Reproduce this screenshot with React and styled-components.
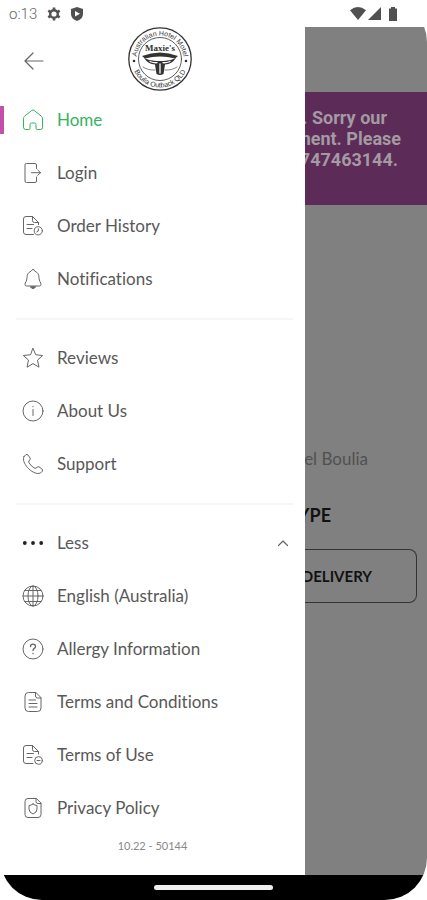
import React from "react";
import styled, { createGlobalStyle } from "styled-components";

const GlobalStyle = createGlobalStyle`
  * {
    box-sizing: border-box;
  }
  body {
    margin: 0;
    background: #fff;
    font-family: Lato, "Liberation Sans", sans-serif;
    font-variant-ligatures: none;
  }
`;

const Screen = styled.div`
  display: flex;
  flex-direction: column;
  min-height: 100vh;
  border-radius: 0 42px 42px 42px;
  overflow: hidden;
  background: #fff;
`;

const StatusBar = styled.header`
  display: flex;
  justify-content: space-between;
  align-items: center;
  height: 27px;
  padding: 0 30px 0 9px;
  color: #505050;
`;

const StatusGroup = styled.div`
  display: flex;
  align-items: center;
  gap: ${(props) => props.$gap}px;
`;

const Clock = styled.span`
  font-family: Roboto, sans-serif;
  font-size: 15px;
  font-weight: 300;
  color: #666;
`;

const Main = styled.div`
  display: flex;
  flex: 1;
`;

const Drawer = styled.aside`
  flex: 5;
  min-width: 0;
  background: #fff;
`;

const DrawerHeader = styled.div`
  display: grid;
  grid-template-columns: 1fr auto 1fr;
  align-items: start;
  height: 66px;
  padding: 0 8px 0 23px;
`;

const BackButton = styled.button`
  display: flex;
  justify-self: start;
  margin-top: 23px;
  padding: 0;
  border: 0;
  background: none;
  color: #666;
`;

const Divider = styled.hr`
  height: 2px;
  margin: 13px 12px 11px 16px;
  border: 0;
  background: #f6f6f6;
`;

const List = styled.ul`
  margin: 0;
  padding: 0;
  list-style: none;
`;

const Item = styled.a`
  display: flex;
  align-items: center;
  width: 100%;
  height: 53px;
  padding: 0 16px 0 0;
  border: 0;
  background: none;
  font-family: inherit;
  font-size: 17px;
  line-height: 24px;
  text-decoration: none;
  text-align: left;
  color: ${(props) => (props.$active ? "#35b25c" : "#666")};
`;

const Marker = styled.span`
  width: 4px;
  height: 28px;
  margin-right: 18px;
  background: ${(props) => (props.$active ? "#c24fae" : "transparent")};
`;

const Label = styled.span`
  flex: 1;
  margin-left: 13px;
  color: ${(props) => (props.$active ? "#35b25c" : "#585858")};
`;

const Version = styled.p`
  margin: 0;
  font-size: 11px;
  line-height: 24px;
  text-align: center;
  color: #888;
`;

const Backdrop = styled.main`
  flex: 2;
  min-width: 0;
  overflow: hidden;
  background: #808080;
`;

const Toolbar = styled.div`
  height: 65px;
`;

const Banner = styled.div`
  height: 113px;
  padding-top: 15px;
  background: #5c2b58;
  font-family: Roboto, sans-serif;
  font-size: 18px;
  font-weight: 700;
  line-height: 21px;
  color: #a39aa2;
`;

const Line = styled.div`
  display: flex;
  justify-content: flex-end;
  padding-right: ${(props) => props.$end}px;
  white-space: nowrap;
`;

const Venue = styled(Line)`
  margin-top: 242px;
  font-size: 17px;
  line-height: 24px;
  color: #505050;
`;

const Heading = styled(Line).attrs({ as: "h2" })`
  margin: 32px 0 22px;
  font-size: 18px;
  font-weight: 700;
  line-height: 24px;
  color: #111;
`;

const DeliveryButton = styled.button`
  display: flex;
  justify-content: flex-end;
  align-items: center;
  width: calc(100% - 10px);
  height: 54px;
  padding: 0 44px 0 0;
  border: 1px solid #333;
  border-left: 0;
  border-radius: 0 8px 8px 0;
  background: none;
  font-family: inherit;
  font-size: 15px;
  font-weight: 700;
  color: #111;
`;

const NavBar = styled.footer`
  display: flex;
  justify-content: center;
  align-items: center;
  height: 25px;
  background: #000;
`;

const HomeHandle = styled.div`
  width: 28%;
  height: 5px;
  border-radius: 3px;
  background: #eee;
`;

const Svg = styled.svg`
  display: block;
  flex: none;
  overflow: visible;
  fill: none;
  stroke: currentColor;
  stroke-width: 1;
  stroke-linecap: round;
  stroke-linejoin: round;
`;

const Icon = ({ children }) => (
  <Svg width="22" height="22" viewBox="0 0 22 22" aria-hidden="true">
    {children}
  </Svg>
);

const icons = {
  home: (
    <path d="M1.5 9.2 Q1.5 8.2 2.3 7.5 L9.8 1.4 Q11 .6 12.2 1.4 L19.7 7.5 Q20.5 8.2 20.5 9.2 V18.5 Q20.5 20.5 18.5 20.5 H15.2 Q14 20.5 14 19.3 V15.5 Q14 14 12.5 14 H9.5 Q8 14 8 15.5 V19.3 Q8 20.5 6.8 20.5 H3.5 Q1.5 20.5 1.5 18.5 Z" />
  ),
  login: (
    <path d="M14.5 6.5 V3 Q14.5 1.5 13 1.5 H4.5 Q3 1.5 3 3 V19 Q3 20.5 4.5 20.5 H13 Q14.5 20.5 14.5 19 V15 M9.5 10.7 H18.5 M15.7 8 L18.5 10.7 L15.7 13.4" />
  ),
  history: (
    <>
      <path d="M11.5 19.5 H4 Q1.5 19.5 1.5 17 V4 Q1.5 1.5 4 1.5 H10.5 L16.5 7.5 V9.5 M10.5 1.5 V5.5 Q10.5 7.5 12.5 7.5 H16.5 M5 9.5 H11.5 M5 13.5 H10" />
      <circle cx="16.3" cy="15.8" r="4.1" />
      <path d="M16.3 13.8 V16 L14.7 17" />
    </>
  ),
  bell: (
    <>
      <path d="M11 1.2 L9 3.2 C6.5 4.2 5 6.5 5 9.5 C5 13.5 3 14.2 3 16.6 Q3 18 4.5 18 H17.5 Q19 18 19 16.6 C19 14.2 17 13.5 17 9.5 C17 6.5 15.5 4.2 13 3.2 Z" />
      <path d="M8.5 19 Q11 22.5 13.5 19 Z" fill="currentColor" />
    </>
  ),
  star: (
    <path d="M11 1.5 L13.8 7.8 L20.7 8.5 L15.5 13.1 L17 20.2 L11 16.6 L5 20.2 L6.5 13.1 L1.3 8.5 L8.2 7.8 Z" />
  ),
  info: (
    <>
      <circle cx="11" cy="11" r="10" />
      <path d="M11 9.5 V15.5 M11 6.4 V6.8" />
    </>
  ),
  phone: (
    <path d="M2.1 3.4 L3.8 1.7 Q5 .9 6.1 2.1 L8 4.9 Q8.7 6 7.8 6.9 L6.8 8 Q6.5 9 7.2 10 Q9 13 12 14.8 Q13 15.5 14 15.2 L15.1 14.2 Q16 13.3 17.1 14 L19.9 15.9 Q21.1 17 20.3 18.2 L18.6 19.9 C14.5 22 8.5 18 5.5 14.5 C2.5 11 .2 6.5 2.1 3.4 Z" />
  ),
  dots: (
    <g fill="currentColor" stroke="none" color="#222">
      <circle cx="2.8" cy="11" r="1.9" />
      <circle cx="11" cy="11" r="1.9" />
      <circle cx="19.2" cy="11" r="1.9" />
    </g>
  ),
  globe: (
    <>
      <circle cx="11" cy="11" r="10" />
      <ellipse cx="11" cy="11" rx="5" ry="10" />
      <path d="M11 1 V21 M1 11 H21 M2.8 5.5 H19.2 M2.8 16.5 H19.2" />
    </>
  ),
  question: (
    <>
      <circle cx="11" cy="11" r="10" />
      <path d="M8.5 8.5 Q8.5 6.2 11 6.2 Q13.5 6.2 13.5 8.4 Q13.5 9.7 12.2 10.4 Q11 11.2 11 12.6 M11 15.3 V15.7" strokeWidth="1.3" />
    </>
  ),
  document: (
    <path d="M13.5 1.5 H6.5 Q3 1.5 3 5 V17 Q3 20.5 6.5 20.5 H15.5 Q19 20.5 19 17 V7 Z M13.5 1.5 V5 Q13.5 7 15.5 7 H19 M7 9 H13.5 M7 12.5 H15 M7 16 H15" />
  ),
  usage: (
    <>
      <path d="M11 19.5 H4 Q1.5 19.5 1.5 17 V4 Q1.5 1.5 4 1.5 H10.5 L16.5 7.5 V10 M10.5 1.5 V5.5 Q10.5 7.5 12.5 7.5 H16.5 M5 9.5 H11.5 M5 13.5 H10" />
      <circle cx="16.5" cy="16.5" r="3.8" />
      <path d="M15 16.5 H18" />
    </>
  ),
  privacy: (
    <>
      <path d="M14 1.5 H6 Q3 1.5 3 4.5 V17.5 Q3 20.5 6 20.5 H16 Q19 20.5 19 17.5 V6.5 Z M14 1.5 V4.5 Q14 6.5 16 6.5 H19" />
      <path d="M11 7 Q9 8.5 7 8.5 V12 Q7 15.5 11 17 Q15 15.5 15 12 V8.5 Q13 8.5 11 7 Z" />
    </>
  ),
};

const sections = [
  [
    { icon: "home", label: "Home", active: true },
    { icon: "login", label: "Login" },
    { icon: "history", label: "Order History" },
    { icon: "bell", label: "Notifications" },
  ],
  [
    { icon: "star", label: "Reviews" },
    { icon: "info", label: "About Us" },
    { icon: "phone", label: "Support" },
  ],
];

const moreItems = [
  { icon: "globe", label: "English (Australia)" },
  { icon: "question", label: "Allergy Information" },
  { icon: "document", label: "Terms and Conditions" },
  { icon: "usage", label: "Terms of Use" },
  { icon: "privacy", label: "Privacy Policy" },
];

const MenuItem = ({ icon, label, active }) => (
  <li>
    <Item href="#" $active={active}>
      <Marker $active={active} />
      <Icon>{icons[icon]}</Icon>
      <Label $active={active}>{label}</Label>
    </Item>
  </li>
);

const Logo = () => (
  <Svg width="64" height="64" viewBox="0 0 64 64" color="#333">
    <defs>
      <path id="arcTop" d="M8.5 32 A23.5 23.5 0 0 1 55.5 32" />
      <path id="arcBottom" d="M3.5 32 A28.5 28.5 0 0 0 60.5 32" />
    </defs>
    <circle cx="32" cy="32" r="31.2" strokeWidth="1.3" />
    <circle cx="32" cy="32" r="21.5" strokeWidth="0.8" />
    <g
      fill="currentColor"
      stroke="none"
      fontFamily="Liberation Sans, sans-serif"
      fontSize="7"
      textAnchor="middle"
    >
      <text>
        <textPath href="#arcTop" startOffset="50%">
          Australian Hotel Motel
        </textPath>
      </text>
      <text>
        <textPath href="#arcBottom" startOffset="50%">
          Boulia Outback QLD
        </textPath>
      </text>
      <circle cx="6" cy="34" r="1.3" />
      <circle cx="58" cy="34" r="1.3" />
      <text x="32" y="24" fontFamily="Liberation Serif, serif" fontSize="9" fontWeight="700">
        Maxie's
      </text>
      <path d="M14 29 Q32 22 50 29 L47 31.5 Q32 27.5 17 31.5 Z" />
      <path d="M16 31 Q22 34 28 34 H36 Q42 34 48 31 Q44 37 37 37.5 L35.5 47 Q32 49 28.5 47 L27 37.5 Q20 37 16 31 Z" />
    </g>
    <path d="M22 34.5 Q26 36 29 35.7 M42 34.5 Q38 36 35 35.7 M32 37 V46" stroke="#fff" strokeWidth="1.3" />
    <path d="M15 40 Q20 43.5 27 43 M37 43 Q44 43.5 49 40" strokeWidth="0.6" />
  </Svg>
);

const App = () => (
  <>
    <GlobalStyle />
    <Screen>
      <StatusBar>
        <StatusGroup $gap={10}>
          <Clock>o:13</Clock>
          <Svg width="14" height="14" viewBox="0 0 14 14">
            <circle cx="7" cy="7" r="3.8" strokeWidth="2.4" />
            <path
              d="M7 0.4 V2.5 M7 11.5 V13.6 M1.3 3.7 L3.1 4.8 M10.9 9.2 L12.7 10.3 M1.3 10.3 L3.1 9.2 M10.9 4.8 L12.7 3.7"
              strokeWidth="2.6"
              strokeLinecap="butt"
            />
          </Svg>
          <Svg width="12" height="14" viewBox="0 0 12 14">
            <path d="M6 0 L12 2 V7 Q12 12 6 14 Q0 12 0 7 V2 Z" fill="currentColor" stroke="none" />
            <path d="M4 4 L9 6.8 L4 9.6 Z" fill="#fff" stroke="none" />
          </Svg>
        </StatusGroup>
        <StatusGroup $gap={2}>
          <Svg width="16" height="13" viewBox="0 0 16 13">
            <path d="M0 3.2 Q8 -3 16 3.2 L8 13 Z" fill="currentColor" stroke="none" />
          </Svg>
          <Svg width="13" height="13" viewBox="0 0 13 13">
            <path d="M13 0 V13 H0 Z" fill="currentColor" stroke="none" />
          </Svg>
          <Svg width="14" height="14" viewBox="0 0 14 14">
            <path d="M8 0 H12 V1.5 H14 V14 H6 V1.5 H8 Z" fill="currentColor" stroke="none" />
          </Svg>
        </StatusGroup>
      </StatusBar>
      <Main>
        <Drawer>
          <DrawerHeader>
            <BackButton aria-label="Back">
              <Icon>
                <path d="M20 11 H2 M10 3 L2 11 L10 19" strokeWidth="1.2" />
              </Icon>
            </BackButton>
            <Logo />
          </DrawerHeader>
          <nav>
            {sections.map((items, index) => (
              <React.Fragment key={index}>
                <List>
                  {items.map((item) => (
                    <MenuItem key={item.label} {...item} />
                  ))}
                </List>
                <Divider />
              </React.Fragment>
            ))}
            <Item as="button" type="button" aria-expanded="true">
              <Marker />
              <Icon>{icons.dots}</Icon>
              <Label>Less</Label>
              <Svg width="12" height="8" viewBox="0 0 12 8">
                <path d="M1.5 6.5 L6 2 L10.5 6.5" strokeWidth="1.2" />
              </Svg>
            </Item>
            <List>
              {moreItems.map((item) => (
                <MenuItem key={item.label} {...item} />
              ))}
            </List>
          </nav>
          <Version>10.22 - 50144</Version>
        </Drawer>
        <Backdrop>
          <Toolbar />
          <Banner>
            <Line $end={40}>. Sorry our</Line>
            <Line $end={26}>ment. Please</Line>
            <Line $end={29}>747463144.</Line>
          </Banner>
          <Venue $end={59}>el Boulia</Venue>
          <Heading $end={96}>YPE</Heading>
          <DeliveryButton>DELIVERY</DeliveryButton>
        </Backdrop>
      </Main>
      <NavBar>
        <HomeHandle />
      </NavBar>
    </Screen>
  </>
);

export default App;
